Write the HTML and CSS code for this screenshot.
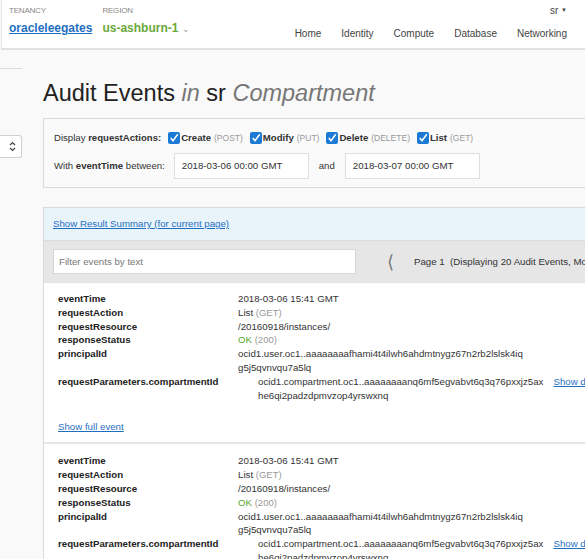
FILE: index.html
```html
<!DOCTYPE html>
<html>
<head>
    <title>Audit Events</title>
    <link rel="stylesheet" href="styles.css">
</head>
<body>
    <div class="header">
        <div class="brand">
            <div class="brand-item">
                <div class="brand-label">TENANCY</div>
                <a class="tenancy" href="#">oracleleegates</a>
            </div>
            <div class="brand-item">
                <div class="brand-label">REGION</div>
                <span class="region">us-ashburn-1</span><span class="region-caret">&#8964;</span>
            </div>
        </div>
        <div class="header-right">
            <div class="user">sr <span class="user-caret">&#9660;</span></div>
            <div class="nav">
                <a href="#">Home</a>
                <a href="#">Identity</a>
                <a href="#">Compute</a>
                <a href="#">Database</a>
                <a href="#">Networking</a>
            </div>
        </div>
    </div>

    <div class="page">
        <div class="sidebar">
            <div class="sidebar-line"></div>
            <div class="sidebar-select">
                <svg width="7" height="11" viewBox="0 0 7 11"><path d="M1 4 L3.5 1.5 L6 4 M1 7 L3.5 9.5 L6 7" fill="none" stroke="#444" stroke-width="1.2"/></svg>
            </div>
        </div>

        <div class="main">
            <h1 class="title">Audit Events <em>in</em> sr <em>Compartment</em></h1>

            <div class="filters">
                <div class="filter-row">
                    <span class="filter-label">Display <b>requestActions:</b></span>
                    <label class="check"><span class="box"><svg width="12" height="12" viewBox="0 0 12 12"><path d="M2.8 6 L5 8.8 L9.8 2.3" fill="none" stroke="#fff" stroke-width="1.5"/></svg></span><b>Create</b> <span class="muted">(POST)</span></label>
                    <label class="check"><span class="box"><svg width="12" height="12" viewBox="0 0 12 12"><path d="M2.8 6 L5 8.8 L9.8 2.3" fill="none" stroke="#fff" stroke-width="1.5"/></svg></span><b>Modify</b> <span class="muted">(PUT)</span></label>
                    <label class="check"><span class="box"><svg width="12" height="12" viewBox="0 0 12 12"><path d="M2.8 6 L5 8.8 L9.8 2.3" fill="none" stroke="#fff" stroke-width="1.5"/></svg></span><b>Delete</b> <span class="muted">(DELETE)</span></label>
                    <label class="check"><span class="box"><svg width="12" height="12" viewBox="0 0 12 12"><path d="M2.8 6 L5 8.8 L9.8 2.3" fill="none" stroke="#fff" stroke-width="1.5"/></svg></span><b>List</b> <span class="muted">(GET)</span></label>
                </div>
                <div class="filter-row">
                    <span class="filter-label">With <b>eventTime</b> between:</span>
                    <div class="date-input">2018-03-06 00:00 GMT</div>
                    <span class="and">and</span>
                    <div class="date-input">2018-03-07 00:00 GMT</div>
                </div>
            </div>

            <div class="results">
                <div class="summary"><a href="#">Show Result Summary (for current page)</a></div>
                <div class="toolbar">
                    <div class="search">Filter events by text</div>
                    <span class="chevron">&#10216;</span>
                    <span class="page-info">Page 1&nbsp; (Displaying 20 Audit Events, More available)</span>
                </div>

                <div class="event">
                    <div class="fields">
                        <div class="key">eventTime</div><div class="val">2018-03-06 15:41 GMT</div>
                        <div class="key">requestAction</div><div class="val">List <span class="muted">(GET)</span></div>
                        <div class="key">requestResource</div><div class="val">/20160918/instances/</div>
                        <div class="key">responseStatus</div><div class="val"><span class="ok">OK</span> <span class="muted">(200)</span></div>
                        <div class="key">principalId</div><div class="val">ocid1.user.oc1..aaaaaaaafhami4t4ilwh6ahdmtnygz67n2rb2lslsk4iq<br>g5j5qvnvqu7a5lq</div>
                        <div class="key">requestParameters.compartmentId</div><div class="val indent"><span class="ocid">ocid1.compartment.oc1..aaaaaaaanq6mf5egvabvt6q3q76pxxjz5ax<br>he6qi2padzdpmvzop4yrswxnq</span><a href="#">Show details</a></div>
                    </div>
                    <a class="full" href="#">Show full event</a>
                </div>

                <div class="event">
                    <div class="fields">
                        <div class="key">eventTime</div><div class="val">2018-03-06 15:41 GMT</div>
                        <div class="key">requestAction</div><div class="val">List <span class="muted">(GET)</span></div>
                        <div class="key">requestResource</div><div class="val">/20160918/instances/</div>
                        <div class="key">responseStatus</div><div class="val"><span class="ok">OK</span> <span class="muted">(200)</span></div>
                        <div class="key">principalId</div><div class="val">ocid1.user.oc1..aaaaaaaafhami4t4ilwh6ahdmtnygz67n2rb2lslsk4iq<br>g5j5qvnvqu7a5lq</div>
                        <div class="key">requestParameters.compartmentId</div><div class="val indent"><span class="ocid">ocid1.compartment.oc1..aaaaaaaanq6mf5egvabvt6q3q76pxxjz5ax<br>he6qi2padzdpmvzop4yrswxnq</span><a href="#">Show details</a></div>
                    </div>
                    <a class="full" href="#">Show full event</a>
                </div>
            </div>
        </div>
    </div>
</body>
</html>
```

FILE: styles.css
```css
body {
    margin: 0;
    font-family: "Liberation Sans", Arial, sans-serif;
    color: #333;
    background-color: #f9f9f9;
    width: 585px;
    height: 559px;
    overflow: hidden;
}

a {
    color: #1f6fbf;
}

.header {
    display: flex;
    justify-content: space-between;
    height: 48px;
    background-color: #fff;
    border-bottom: 2px solid #e2e2e2;
    border-left: 1px solid #e6e6e6;
    margin-left: 1px;
}

.brand {
    display: flex;
    gap: 10px;
    padding: 6px 0 0 7px;
}

.brand-label {
    font-size: 8px;
    color: #888;
    letter-spacing: -0.2px;
    margin-bottom: 3px;
}

.tenancy {
    font-size: 12px;
    font-weight: bold;
    color: #1f6fbf;
}

.region {
    font-size: 12px;
    font-weight: bold;
    color: #6aa83a;
}

.region-caret {
    font-size: 9px;
    color: #999;
    margin-left: 4px;
}

.header-right {
    display: flex;
    flex-direction: column;
    align-items: flex-end;
    padding-right: 18px;
}

.user {
    font-size: 10px;
    color: #444;
    margin-top: 5px;
}

.user-caret {
    font-size: 6px;
    vertical-align: 2px;
}

.nav {
    display: flex;
    gap: 20px;
    margin-top: 12px;
}

.nav a {
    font-size: 10px;
    color: #444;
    text-decoration: none;
}

.page {
    display: flex;
}

.sidebar {
    width: 22px;
    flex-shrink: 0;
}

.sidebar-line {
    height: 1px;
    background-color: #dcdcdc;
    margin-top: 18px;
}

.sidebar-select {
    margin-top: 66px;
    height: 21px;
    background-color: #fff;
    border: 1px solid #cfcfcf;
    border-left: none;
    border-radius: 0 3px 3px 0;
    display: flex;
    align-items: center;
    justify-content: flex-end;
    padding-right: 5px;
}

.main {
    margin-left: 21px;
    width: 640px;
    flex-shrink: 0;
}

.title {
    font-size: 23.5px;
    font-weight: normal;
    color: #222;
    margin: 29px 0 11px 0;
    line-height: 28px;
}

.title em {
    color: #777;
}

.filters {
    background-color: #fafafa;
    border: 1px solid #d9d9d9;
    border-right: none;
    padding: 6px 0 9px 10px;
}

.filter-row {
    display: flex;
    align-items: center;
    font-size: 9.6px;
    color: #333;
    height: 25px;
}

.filter-row + .filter-row {
    margin-top: 3px;
}

.filter-label {
    margin-right: 7px;
}

.check {
    display: flex;
    align-items: center;
    margin-right: 7px;
}

.box {
    width: 12px;
    height: 12px;
    background-color: #1b7bd4;
    border-radius: 2px;
    margin-right: 1px;
    display: flex;
}

.muted {
    color: #999;
    font-size: 9.5px;
}

.check .muted {
    font-size: 8.5px;
    margin-left: 3px;
}

.date-input {
    width: 126px;
    height: 24px;
    line-height: 24px;
    background-color: #fff;
    border: 1px solid #dedede;
    padding-left: 7px;
    font-size: 9.7px;
    color: #333;
    margin-left: 2px;
}

.and {
    margin: 0 8px 0 10px;
}

.results {
    margin-top: 19px;
    border: 1px solid #d9d9d9;
    border-right: none;
    background-color: #fff;
}

.summary {
    background-color: #e9f3fa;
    height: 32px;
    line-height: 32px;
    padding-left: 9px;
    font-size: 9.7px;
    border-bottom: 1px solid #d8dde0;
}

.toolbar {
    display: flex;
    align-items: center;
    background-color: #e6e6e6;
    height: 41px;
    padding-left: 9px;
    font-size: 9.7px;
}

.search {
    width: 296px;
    height: 23px;
    line-height: 23px;
    background-color: #fff;
    border: 1px solid #d6d6d6;
    padding-left: 5px;
    color: #777;
}

.chevron {
    font-size: 18px;
    color: #777;
    margin-left: 31px;
    margin-right: 20px;
}

.page-info {
    color: #333;
    white-space: nowrap;
}

.event {
    padding: 9px 0 8px 14px;
    border-top: 1px solid #e4e4e4;
}

.event + .event {
    border-top: 2px solid #e6e6e6;
    padding-top: 10px;
}

.fields {
    display: grid;
    grid-template-columns: 180px 1fr;
    font-size: 9.7px;
    line-height: 13.8px;
}

.key {
    font-weight: bold;
    color: #222;
}

.val {
    color: #333;
}

.val.indent {
    padding-left: 20px;
    display: flex;
}

.ocid {
    margin-right: 10px;
}

.ok {
    color: #5aa832;
}

.full {
    display: inline-block;
    font-size: 9.7px;
    margin-top: 19px;
}
```
